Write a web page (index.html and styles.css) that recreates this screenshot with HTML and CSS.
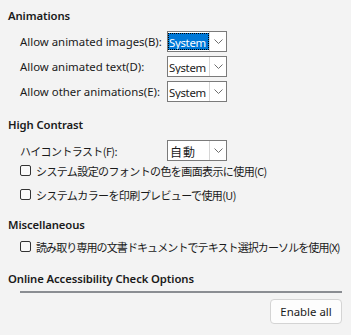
FILE: index.html
```html
<!DOCTYPE html>
<html lang="ja">
<head>
<meta charset="utf-8">
<link rel="stylesheet" href="styles.css">
</head>
<body>
<div class="page">
  <section class="section">
    <div class="heading">Animations</div>
    <div class="rows">
      <div class="row"><span class="label">Allow animated images(B):</span>
        <div class="combo"><span class="value selected">System</span><span class="drop"><svg width="9" height="5" viewBox="0 0 9 5"><path d="M0.5 0.5 L4.5 4.5 L8.5 0.5" fill="none" stroke="#6e6e6e" stroke-width="1"/></svg></span></div></div>
      <div class="row"><span class="label">Allow animated text(D):</span>
        <div class="combo"><span class="value">System</span><span class="drop"><svg width="9" height="5" viewBox="0 0 9 5"><path d="M0.5 0.5 L4.5 4.5 L8.5 0.5" fill="none" stroke="#6e6e6e" stroke-width="1"/></svg></span></div></div>
      <div class="row"><span class="label">Allow other animations(E):</span>
        <div class="combo"><span class="value">System</span><span class="drop"><svg width="9" height="5" viewBox="0 0 9 5"><path d="M0.5 0.5 L4.5 4.5 L8.5 0.5" fill="none" stroke="#6e6e6e" stroke-width="1"/></svg></span></div></div>
    </div>
  </section>
  <section class="section">
    <div class="heading">High Contrast</div>
    <div class="rows">
      <div class="row"><span class="label jp">ハイコントラスト(F):</span>
        <div class="combo"><span class="value jp">自動</span><span class="drop"><svg width="9" height="5" viewBox="0 0 9 5"><path d="M0.5 0.5 L4.5 4.5 L8.5 0.5" fill="none" stroke="#6e6e6e" stroke-width="1"/></svg></span></div></div>
    </div>
    <div class="checks">
      <label class="check"><span class="box"></span><span class="jp">システム設定のフォントの色を画面表示に使用(C)</span></label>
      <label class="check"><span class="box"></span><span class="jp">システムカラーを印刷プレビューで使用(U)</span></label>
    </div>
  </section>
  <section class="section misc">
    <div class="heading">Miscellaneous</div>
    <div class="checks first">
      <label class="check"><span class="box"></span><span class="jp long">読み取り専用の文書ドキュメントでテキスト選択カーソルを使用(X)</span></label>
    </div>
  </section>
  <section class="section online">
    <div class="heading">Online Accessibility Check Options</div>
    <div class="rule"></div>
    <div class="actions"><button class="btn">Enable all</button></div>
  </section>
</div>
</body>
</html>
```

FILE: styles.css
```css
html, body {
  margin: 0;
  padding: 0;
  background: #f3f3f3;
}
body {
  width: 351px;
  height: 335px;
  overflow: hidden;
  font-family: "Noto Sans", "Liberation Sans", sans-serif;
  font-size: 11.4px;
  color: #1a1a1a;
}
.page {
  padding: 8px 9px 0 8px;
}
.section + .section {
  margin-top: 15px;
}
.heading {
  height: 16px;
  line-height: 16px;
  font-weight: 600;
  font-size: 11.3px;
  letter-spacing: -0.1px;
}
.rows {
  margin: 7px 0 0 12px;
  display: flex;
  flex-direction: column;
  gap: 4px;
}
.row {
  display: flex;
  align-items: center;
  height: 21px;
}
.label {
  width: 147px;
  white-space: nowrap;
}
.jp {
  font-family: "Noto Sans CJK JP", "Noto Sans", sans-serif;
  font-size: 11px;
  letter-spacing: -0.6px;
}
.jp.long {
  letter-spacing: -0.9px;
}
.combo {
  width: 60px;
  height: 21px;
  box-sizing: border-box;
  border: 1px solid #7a7a7a;
  background: #fff;
  display: flex;
}
.value {
  flex: 1;
  margin: 1px 0 1px 0;
  padding-left: 0;
  line-height: 17px;
  white-space: nowrap;
  overflow: hidden;
  box-sizing: border-box;
  border: 1px solid transparent;
  letter-spacing: -0.3px;
}
.value.selected {
  background: #0078d7;
  color: #fff;
  border: 1px dotted #000;
}
.value.jp {
  font-size: 12px;
  letter-spacing: 1px;
  padding-left: 1px;
}
.drop {
  width: 16px;
  border-left: 1px solid #d6d6d6;
  display: flex;
  align-items: center;
  justify-content: center;
}
.checks {
  margin-left: 12px;
  display: flex;
  flex-direction: column;
  gap: 5px;
}
.checks.first {
  margin-top: 4px;
}
.check {
  display: flex;
  align-items: center;
  height: 19px;
  gap: 5px;
  white-space: nowrap;
}
.box {
  width: 11px;
  height: 11px;
  box-sizing: border-box;
  border: 1px solid #333;
  border-radius: 2px;
  background: #f9f9f9;
}
.misc {
  margin-top: 13px !important;
}
.rule {
  margin: 4px 0 0 12px;
  height: 2px;
  background: #8a8d92;
}
.actions {
  display: flex;
  justify-content: flex-end;
  margin-top: 6px;
}
.btn {
  width: 72px;
  height: 25px;
  background: #fdfdfd;
  border: 1px solid #d4d4d4;
  border-radius: 4px;
  font-family: "Noto Sans", "Liberation Sans", sans-serif;
  font-size: 11.4px;
  color: #1a1a1a;
  padding: 0;
}
```
